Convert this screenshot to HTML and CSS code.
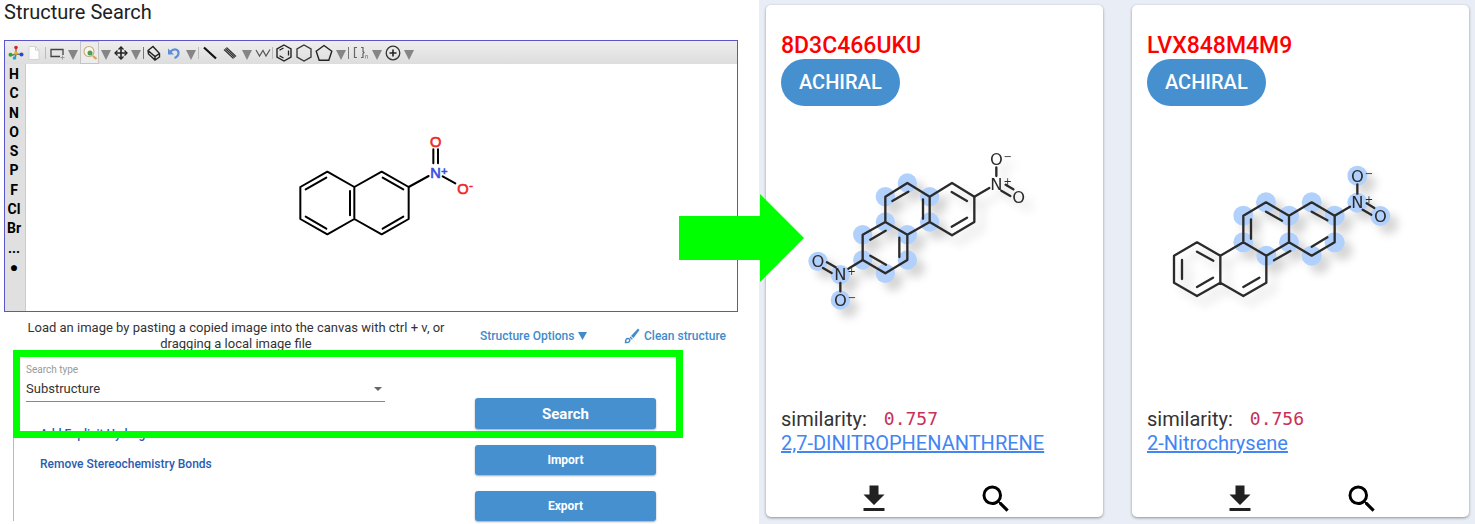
FILE: index.html
```html
<!DOCTYPE html>
<html lang="en">
<head>
<meta charset="utf-8">
<title>Structure Search</title>
<link rel="stylesheet" href="styles.css">
</head>
<body>
<div class="page">
  <main class="search-pane">
    <h1 class="heading">Structure Search</h1>
    <section class="editor">
      <div class="toolbar">
        <button class="tool w20" aria-label="Molecule"><svg width="16" height="16" viewBox="0 0 16 16"><path d="M8 9V3M8 9L3 10.500M8 9l5.500.5M8 9l-1 4.500" stroke="#777" stroke-width="1.500"/><circle cx="8" cy="2.500" r="1.800" fill="#d22"/><circle cx="8" cy="8" r="1.800" fill="#e3b21c"/><circle cx="2.500" cy="9.800" r="2" fill="#2ba62b"/><circle cx="13.500" cy="9.500" r="2" fill="#2a46d8"/><circle cx="6.500" cy="13" r="1.800" fill="#28a0c8"/></svg></button>
        <button class="tool w16" aria-label="New"><svg width="14" height="16" viewBox="0 0 14 16"><path d="M2 1.500h6.500l3.500 3.500v9.500H2z" fill="#fdfdfd" stroke="#d4d4d4"/><path d="M8.500 1.500V5H12" fill="none" stroke="#ccc"/></svg></button>
        <span class="sep wide"></span>
        <button class="tool w18" aria-label="Select"><svg width="16" height="14" viewBox="0 0 16 14"><path d="M14 9V3.500H2v7h9" fill="none" stroke="#444" stroke-width="1.300"/><path d="M11.500 11.500h4M13.500 9.500v4" stroke="#999"/></svg></button>
        <button class="tool drop" aria-label="Select options"></button>
        <button class="tool zoom" aria-label="Zoom"><svg width="16" height="16" viewBox="0 0 16 16"><circle cx="7" cy="6.500" r="5" fill="#f6f6ee" stroke="#cdaa78" stroke-width="1.100"/><circle cx="8" cy="8" r="2.500" fill="#4a9f55"/><path d="M11 11l3.500 3" stroke="#d3a15a" stroke-width="2.200"/></svg></button>
        <button class="tool drop" aria-label="Zoom options"></button>
        <button class="tool w16" aria-label="Move"><svg width="14" height="14" viewBox="0 0 14 14"><path d="M7 1v12M1 7h12" stroke="#222" stroke-width="1.600"/><path d="M4.500 3.500L7 1l2.500 2.500M4.500 10.500L7 13l2.500-2.500M3.500 4.500L1 7l2.500 2.500M10.500 4.500L13 7l-2.500 2.500" fill="none" stroke="#222" stroke-width="1.300"/></svg></button>
        <button class="tool drop" aria-label="Move options"></button>
        <span class="sep dark"></span>
        <button class="tool w18" aria-label="Erase"><svg width="14" height="16" viewBox="0 0 14 16"><path d="M1 5.500L6 1.500l6.500 7v3.500L8 15 1.500 9zM1 5.500l7 6 4.500-3M8 11.500V15" fill="none" stroke="#222" stroke-width="1.400"/></svg></button>
        <button class="tool w21" aria-label="Undo"><svg width="14" height="14" viewBox="0 0 14 14"><path d="M3 6c4-4 8.500-3 8.500 1 0 2.500-1.500 4-4 5" fill="none" stroke="#5b8ddb" stroke-width="2.200"/><path d="M1 2.500v6h6z" fill="#5b8ddb"/></svg></button>
        <button class="tool drop" aria-label="Undo options"></button>
        <span class="sep"></span>
        <button class="tool w20" aria-label="Single bond"><svg width="16" height="16" viewBox="0 0 16 16"><path d="M2 2.500l12 11" stroke="#111" stroke-width="2.200"/></svg></button>
        <button class="tool w20" aria-label="Double bond"><svg width="14" height="14" viewBox="0 0 14 14"><path d="M1 3.500l9.500 9M3.500 1.500l9.500 9M2.300 2.500l9.500 9" stroke="#333" stroke-width="1.100"/></svg></button>
        <button class="tool drop" aria-label="Bond options"></button>
        <button class="tool w18" aria-label="Chain"><svg width="16" height="12" viewBox="0 0 16 12"><path d="M1 3l3.500 6L8 3.500 11 9l4-6.500" fill="none" stroke="#555" stroke-width="1.200"/></svg></button>
        <span class="sep"></span>
        <button class="tool w20" aria-label="Benzene ring"><svg width="18" height="18" viewBox="0 0 18 18"><path d="M9 1l7 4v8l-7 4-7-4V5z" fill="none" stroke="#222" stroke-width="1.400"/><path d="M8.500 4L4.500 6.300M4.500 11.700l4 2.300M13.500 6.500v5" stroke="#222" stroke-width="1.300"/></svg></button>
        <button class="tool w20" aria-label="Six-membered ring"><svg width="18" height="18" viewBox="0 0 18 18"><path d="M9 1l7 4v8l-7 4-7-4V5z" fill="none" stroke="#333" stroke-width="1.300"/></svg></button>
        <button class="tool w20" aria-label="Five-membered ring"><svg width="18" height="18" viewBox="0 0 18 18"><path d="M9 1.500l7.800 5.700-3 9H4.200l-3-9z" fill="none" stroke="#222" stroke-width="1.400"/></svg></button>
        <button class="tool drop" aria-label="Ring options"></button>
        <span class="sep dark"></span>
        <button class="tool w20" aria-label="Brackets"><svg width="16" height="14" viewBox="0 0 16 14"><path d="M5 1.500H2.500v10H5M9 1.500h2v4l1 1-1 1v4H9" fill="none" stroke="#666" stroke-width="1.200"/><path d="M13.500 12.500V9.500h2v3" fill="none" stroke="#999"/></svg></button>
        <button class="tool drop" aria-label="Bracket options"></button>
        <button class="tool w18" aria-label="Charge"><svg width="16" height="16" viewBox="0 0 16 16"><circle cx="8" cy="8" r="6.800" fill="none" stroke="#333" stroke-width="1.300"/><path d="M8 4.500v7M4.500 8h7" stroke="#222" stroke-width="1.600"/></svg></button>
        <button class="tool drop" aria-label="Charge options"></button>
      </div>
      <div class="rail">
        <button>H</button><button>C</button><button>N</button><button>O</button><button>S</button><button>P</button><button>F</button><button>Cl</button><button>Br</button><button>...</button><button>●</button>
      </div>
      <div class="canvas">
        <svg width="210" height="130" viewBox="-9 8 630 390" role="img" aria-label="2-nitronaphthalene">
          <g fill="none" stroke="#000" stroke-width="6" stroke-linecap="round" stroke-linejoin="round">
            <path d="M223 200L142 154 61 200V296L142 342 223 296V200L305 154 386 200V296L305 342 223 296M386 200L446 167M488 168L526 189"/>
            <path d="M77 207L139 172M77 289L139 325M210 212V285M308 172L370 207M308 325L370 289M460 87V129M474 87V129"/>
          </g>
          <g class="atom">
            <text x="467" y="174" fill="#3c4fe0" stroke="#3c4fe0">N</text><text x="493" y="163" class="charge" fill="#3c4fe0" stroke="#3c4fe0">+</text>
            <text x="467" y="81" fill="#f02a2a" stroke="#f02a2a">O</text>
            <text x="549" y="222" fill="#f02a2a" stroke="#f02a2a">O</text><text x="573" y="207" class="charge" fill="#f02a2a" stroke="#f02a2a">-</text>
          </g>
        </svg>
      </div>
    </section>
    <div class="options">
      <p class="hint">Load an image by pasting a copied image into the canvas with ctrl + v, or dragging a local image file</p>
      <button class="text-action">Structure Options <svg width="9" height="8" viewBox="0 0 9 8"><path d="M0 0h9L4.500 8z" fill="currentColor"/></svg></button>
      <button class="text-action"><svg width="16" height="16" viewBox="0 0 16 16"><path d="M14 .5l1.500 1.500-6 8L7 8z" fill="currentColor"/><path d="M6.500 8.500l2.300 2.300-1 1-2.300-2.300z" fill="currentColor"/><path d="M1.500 14.500c0-3 .8-4 2.500-4 2 0 2.200 2 1.200 3.200-.9 1-2.200.9-3.700.8z" fill="none" stroke="currentColor" stroke-width="1.500"/></svg>Clean structure</button>
    </div>
    <form class="panel">
      <div class="fields">
        <label class="field-label" for="search-type">Search type</label>
        <div class="select-box">
          <select id="search-type"><option>Substructure</option></select>
          <svg width="8" height="4" viewBox="0 0 8 4"><path d="M0 0h8L4 4z" fill="#666"/></svg>
        </div>
        <button type="button" class="side-action first">Add Explicit Hydrogens</button>
        <button type="button" class="side-action">Remove Stereochemistry Bonds</button>
      </div>
      <div class="actions">
        <button type="button" class="primary large">Search</button>
        <button type="button" class="primary">Import</button>
        <button type="button" class="primary">Export</button>
      </div>
      <div class="frame"></div>
    </form>
  </main>

  <section class="results">
    <article class="card">
      <h2 class="code">8D3C466UKU</h2>
      <span class="chip">ACHIRAL</span>
      <svg class="structure" width="280" height="190" viewBox="-27 -30 840 570" role="img" aria-label="2,7-dinitrophenanthrene">
        <g fill="#b1d0fc">
          <circle cx="352" cy="129" r="29"/><circle cx="286" cy="170" r="29"/><circle cx="419" cy="170" r="29"/><circle cx="419" cy="246" r="29"/><circle cx="286" cy="246" r="29"/><circle cx="218" cy="284" r="29"/><circle cx="218" cy="360" r="29"/><circle cx="286" cy="400" r="29"/><circle cx="352" cy="360" r="29"/><circle cx="352" cy="284" r="29"/><circle cx="84" cy="364" r="29"/><circle cx="151" cy="404" r="29"/><circle cx="151" cy="480" r="29"/>
        </g>
        <g class="bonds">
          <path d="M286 246L218 284V360L286 400 352 360V284L286 246V170L352 129 419 170V246L352 284M419 170L486 129 553 170V246L486 286 419 246"/>
          <path d="M553 170L598 144M619 82V108M634 152L661 168M647 134L670 148M218 360L175 386M151 429V454M111 367L137 382M99 384L125 399"/>
          <path d="M307 183L355 155M399 178V236M485 156L531 183M531 233L485 260M241 299L287 272M328 293V351M241 347L288 374"/>
        </g>
        <g class="atom-thin">
          <text x="619" y="151">N</text><text x="653" y="125" class="sign">+</text><text x="619" y="74">O</text><text x="653" y="48" class="sign">−</text><text x="686" y="190">O</text>
          <text x="151" y="421">N</text><text x="185" y="395" class="sign">+</text><text x="84" y="381">O</text><text x="151" y="498">O</text><text x="186" y="471" class="sign">−</text>
        </g>
      </svg>
      <p class="similarity">similarity: <code>0.757</code></p>
      <a class="name" href="#dinitrophenanthrene">2,7-DINITROPHENANTHRENE</a>
      <footer class="card-actions">
        <button aria-label="Download"><svg width="36" height="36" viewBox="0 0 24 24"><path fill="#212121" d="M19 9h-4V3H9v6H5l7 7 7-7zM5 18v2h14v-2H5z"/></svg></button>
        <button aria-label="Search similar"><svg width="36" height="36" viewBox="0 0 24 24"><path fill="#000" d="M15.500 14h-.79l-.28-.27A6.470 6.470 0 0 0 16 9.500 6.500 6.500 0 1 0 9.500 16c1.610 0 3.090-.59 4.230-1.570l.27.28v.79l5 4.990L20.490 19l-4.990-5zm-6 0C7.010 14 5 11.990 5 9.500S7.010 5 9.500 5 14 7.010 14 9.500 11.990 14 9.500 14z"/></svg></button>
      </footer>
    </article>
    <article class="card">
      <h2 class="code">LVX848M4M9</h2>
      <span class="chip">ACHIRAL</span>
      <svg class="structure" width="280" height="190" viewBox="-39 -60 840 570" role="img" aria-label="2-nitrochrysene">
        <g fill="#b1d0fc">
          <circle cx="318" cy="157" r="30"/><circle cx="250" cy="197" r="30"/><circle cx="250" cy="277" r="30"/><circle cx="387" cy="197" r="30"/><circle cx="387" cy="277" r="30"/><circle cx="319" cy="317" r="30"/><circle cx="455" cy="157" r="30"/><circle cx="524" cy="197" r="30"/><circle cx="524" cy="277" r="30"/><circle cx="455" cy="317" r="30"/><circle cx="592" cy="158" r="30"/><circle cx="592" cy="77" r="30"/><circle cx="661" cy="198" r="30"/>
        </g>
        <g class="bonds">
          <path d="M181 317L111 277 42 317V398L111 438 181 398V317L250 277 319 317V398L250 438 181 398M250 277V197L318 157 387 197V277L319 317M387 197L455 157 524 197V277L455 317 387 277"/>
          <path d="M524 197L570 170M592 103V131M608 179L634 194M620 160L643 174"/>
          <path d="M66 330V387M111 305L160 332M111 411L159 383M250 411L298 383M273 208V266M318 185L366 212M342 331L391 303M455 185L502 211M455 290L502 262"/>
        </g>
        <g class="atom-thin">
          <text x="592" y="175">N</text><text x="627" y="149" class="sign">+</text><text x="592" y="95">O</text><text x="627" y="69" class="sign">−</text><text x="661" y="216">O</text>
        </g>
      </svg>
      <p class="similarity">similarity: <code>0.756</code></p>
      <a class="name" href="#nitrochrysene">2-Nitrochrysene</a>
      <footer class="card-actions">
        <button aria-label="Download"><svg width="36" height="36" viewBox="0 0 24 24"><path fill="#212121" d="M19 9h-4V3H9v6H5l7 7 7-7zM5 18v2h14v-2H5z"/></svg></button>
        <button aria-label="Search similar"><svg width="36" height="36" viewBox="0 0 24 24"><path fill="#000" d="M15.500 14h-.79l-.28-.27A6.470 6.470 0 0 0 16 9.500 6.500 6.500 0 1 0 9.500 16c1.610 0 3.090-.59 4.230-1.570l.27.28v.79l5 4.990L20.490 19l-4.990-5zm-6 0C7.010 14 5 11.990 5 9.500S7.010 5 9.500 5 14 7.010 14 9.500 11.990 14 9.500 14z"/></svg></button>
      </footer>
    </article>
    <svg class="arrow" width="126" height="88" viewBox="0 0 126 88" aria-hidden="true"><path d="M0 22h81V0l44 44-44 44V66H0z" fill="#0f0"/></svg>
  </section>
</div>
</body>
</html>
```
FILE: styles.css
```css
* { box-sizing: border-box; }
body { margin: 0; background: #fff; color: #212121; font-family: Roboto, "Liberation Sans", sans-serif; }
h1, h2, p { margin: 0; font-weight: 400; }
button { margin: 0; padding: 0; border: 0; background: none; color: inherit; font: inherit; }
svg { display: block; flex: none; }

.page { display: grid; grid-template-columns: 759fr 716fr; min-height: 100vh; }
.search-pane { padding: 0 21px 3px 4px; }
.heading { font-size: 20px; line-height: 24px; padding-bottom: 16px; }

/* Structure editor */
.editor { display: grid; grid-template-columns: 21px 1fr; grid-template-rows: 23px 247px; border: 1px solid #5a55c8; }
.toolbar { grid-column: 1 / -1; display: flex; align-items: center; padding-left: 1px; background: linear-gradient(#eee, #ddd); }
.tool { display: flex; align-items: center; justify-content: center; height: 23px; }
.w16 { width: 16px; }
.w18 { width: 18px; }
.w20 { width: 20px; }
.w21 { width: 21px; }
.zoom { width: 19px; border: 1px solid #c4c4c4; background: #ececec; }
.drop { width: 14px; padding-top: 4px; }
.drop::before { content: ""; border: 5px solid transparent; border-top: 10px solid #858585; border-bottom: 0; }
.sep { width: 1px; height: 12px; margin-right: 1px; background: #bbb; }
.sep.wide { margin: 0 2px 0 3px; }
.sep.dark { background: #777; }
.rail { display: flex; flex-direction: column; justify-content: space-between; padding: 2px 0 36px; background: #e0e0e0; border-right: 1px solid #ccc; }
.rail button { padding-right: 2px; font-size: 14px; font-weight: 700; line-height: 16px; color: #000; }
.canvas { display: flex; align-items: center; justify-content: center; }
.atom { font-size: 44px; text-anchor: middle; font-family: "Liberation Sans", Arial, sans-serif; stroke-width: 2; }
.atom .charge { font-size: 32px; }

.options { display: grid; grid-template-columns: 446px 123px auto; column-gap: 21px; justify-content: start; align-items: center; padding: 8px 0 0 9px; }
.hint { font-size: 13px; line-height: 16px; text-align: center; color: #333; }
.text-action { display: flex; align-items: center; gap: 4px; font-size: 12px; font-weight: 500; color: #428bca; white-space: nowrap; }

/* Search form */
.panel { position: relative; display: grid; grid-template-columns: 359px 181px; column-gap: 90px; width: 670px; padding-left: 12px; margin: -2px 0 0 9px; border-left: 1px solid #bbb; }
.fields { display: flex; flex-direction: column; align-items: flex-start; padding-top: 14px; }
.field-label { font-size: 10px; line-height: 12px; color: #999; }
.select-box { display: flex; align-items: center; width: 100%; height: 26px; border-bottom: 1px solid #888; }
.select-box select { flex: 1; appearance: none; border: 0; padding: 0; margin-right: 2px; background: none; font: 13px/20px Roboto, "Liberation Sans", sans-serif; color: #333; }
.select-box svg { margin-right: 3px; }
.side-action { margin: 12px 0 0 14px; font-size: 12px; font-weight: 500; line-height: 18px; color: #2a5db0; }
.side-action.first { margin-top: 23px; }
.actions { display: flex; flex-direction: column; gap: 16px; padding-top: 48px; }
.primary { height: 30px; border-radius: 3px; background: #4690d0; color: #fff; font-size: 12px; font-weight: 700; box-shadow: 0 1px 2px rgba(0, 0, 0, .35); }
.primary.large { font-size: 15px; height: 31px; }
.frame { position: absolute; inset: 0 0 auto -1px; height: 88px; border: 7px solid #0f0; pointer-events: none; }

/* Result cards */
.results { position: relative; display: grid; grid-template-columns: 1fr 1fr; gap: 29px; padding: 5px 6px 7px 7px; background: #e9eef6; }
.card { display: flex; flex-direction: column; align-items: flex-start; padding: 27px 15px 0; border-radius: 5px; background: #fff; box-shadow: 0 1px 3px rgba(0, 0, 0, .4); }
.code { font-size: 23px; font-weight: 500; line-height: 27px; color: #f00; }
.chip { padding: 0 18px; border-radius: 24px; background: #4690d0; color: #fff; font-size: 20px; font-weight: 500; line-height: 47px; }
.structure { margin: 24px 0 87px; filter: drop-shadow(8px 8px 4px rgba(0, 0, 0, .16)); }
.bonds { fill: none; stroke: #2b2b2b; stroke-width: 7; stroke-linecap: round; stroke-linejoin: round; }
.atom-thin { fill: #2b2b2b; font-size: 49px; text-anchor: middle; font-family: "DejaVu Sans", sans-serif; }
.atom-thin .sign { font-size: 30px; dominant-baseline: central; }
.similarity, .name { font-size: 20px; line-height: 24px; }
.similarity { display: flex; align-items: center; color: #333; }
.similarity code { margin-left: 17px; font: 18px/20px "DejaVu Sans Mono", monospace; color: #c7305a; }
.name { color: #4285f4; }
.card-actions { display: flex; align-self: stretch; justify-content: center; gap: 86px; margin-top: auto; }
.arrow { position: absolute; left: -80px; top: 194px; }
```
